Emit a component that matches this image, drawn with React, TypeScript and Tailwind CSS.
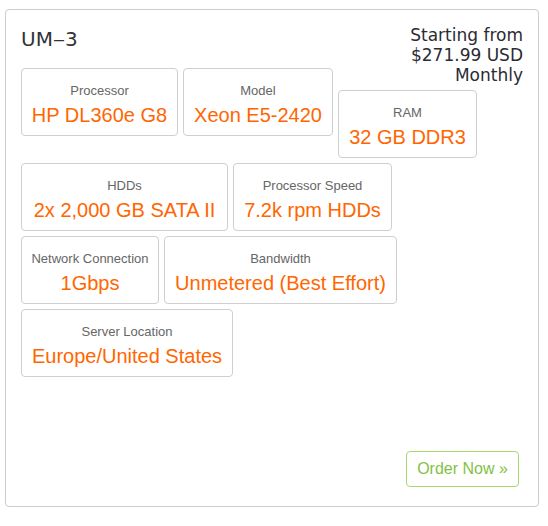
import React from "react";

type Spec = { label: string; value: string; w: string; extra?: string };

const rows: Spec[][] = [
  [
    { label: "Processor", value: "HP DL360e G8", w: "w-[157px]" },
    { label: "Model", value: "Xeon E5-2420", w: "w-[150px]" },
    { label: "RAM", value: "32 GB DDR3", w: "w-[139px]", extra: "mt-[22px]" },
  ],
  [
    { label: "HDDs", value: "2x 2,000 GB SATA II", w: "w-[207px]" },
    { label: "Processor Speed", value: "7.2k rpm HDDs", w: "w-[159px]" },
  ],
  [
    { label: "Network Connection", value: "1Gbps", w: "w-[138px]" },
    { label: "Bandwidth", value: "Unmetered (Best Effort)", w: "w-[233px]" },
  ],
  [{ label: "Server Location", value: "Europe/United States", w: "w-[212px]" }],
];

function SpecBox({ s }: { s: Spec }) {
  return (
    <div
      className={`${s.w} ${s.extra ?? ""} h-[68px] shrink-0 rounded-[4px] border border-[#cfcfcf] bg-white pt-[11px] pb-[7px] text-center whitespace-nowrap`}
    >
      <div className="text-[13px] leading-[22px] text-[#666666]">{s.label}</div>
      <div className="text-[20px] leading-[26px] text-[#ff6600]">{s.value}</div>
    </div>
  );
}

export default function App() {
  return (
    <div className="min-h-[526px] w-[548px] bg-white pt-[9px] pl-[5px]" style={{ fontFamily: '"Liberation Sans", Arial, sans-serif' }}>
      <div className="flex h-[498px] w-[534px] flex-col rounded-[4px] border border-[#cccccc] px-[15px] pt-[15px] pb-[15px]">
        <div className="grid grid-cols-[1fr_auto]">
          <div
            className="col-start-1 row-start-1 mb-[15px] text-[20px] leading-[28px] text-[#333333]"
            style={{ fontFamily: '"DejaVu Sans", Verdana, sans-serif' }}
          >
            UM<span className="inline-block scale-x-125 px-[1px]">–</span>3
          </div>
          <div
            className="col-start-2 row-start-1 row-span-2 self-start text-right text-[17px] leading-[20px] text-[#2b2b33]"
            style={{ fontFamily: '"DejaVu Sans", Verdana, sans-serif' }}
          >
            <div>Starting from</div>
            <div>$271.99 USD</div>
            <div>Monthly</div>
          </div>
          <div className="col-start-1 col-span-2 row-start-2 flex flex-col gap-[5px]">
            {rows.map((row, i) => (
              <div key={i} className="flex items-start gap-[5px]">
                {row.map((s) => (
                  <SpecBox key={s.label} s={s} />
                ))}
              </div>
            ))}
          </div>
        </div>
        <div className="mt-auto flex justify-end">
          <button className="mr-[4px] mb-[4px] h-[36px] w-[113px] rounded-[4px] border border-[#a6d86e] bg-white text-[16px] leading-[20px] text-[#84bf46]">
            Order Now »
          </button>
        </div>
      </div>
    </div>
  );
}
